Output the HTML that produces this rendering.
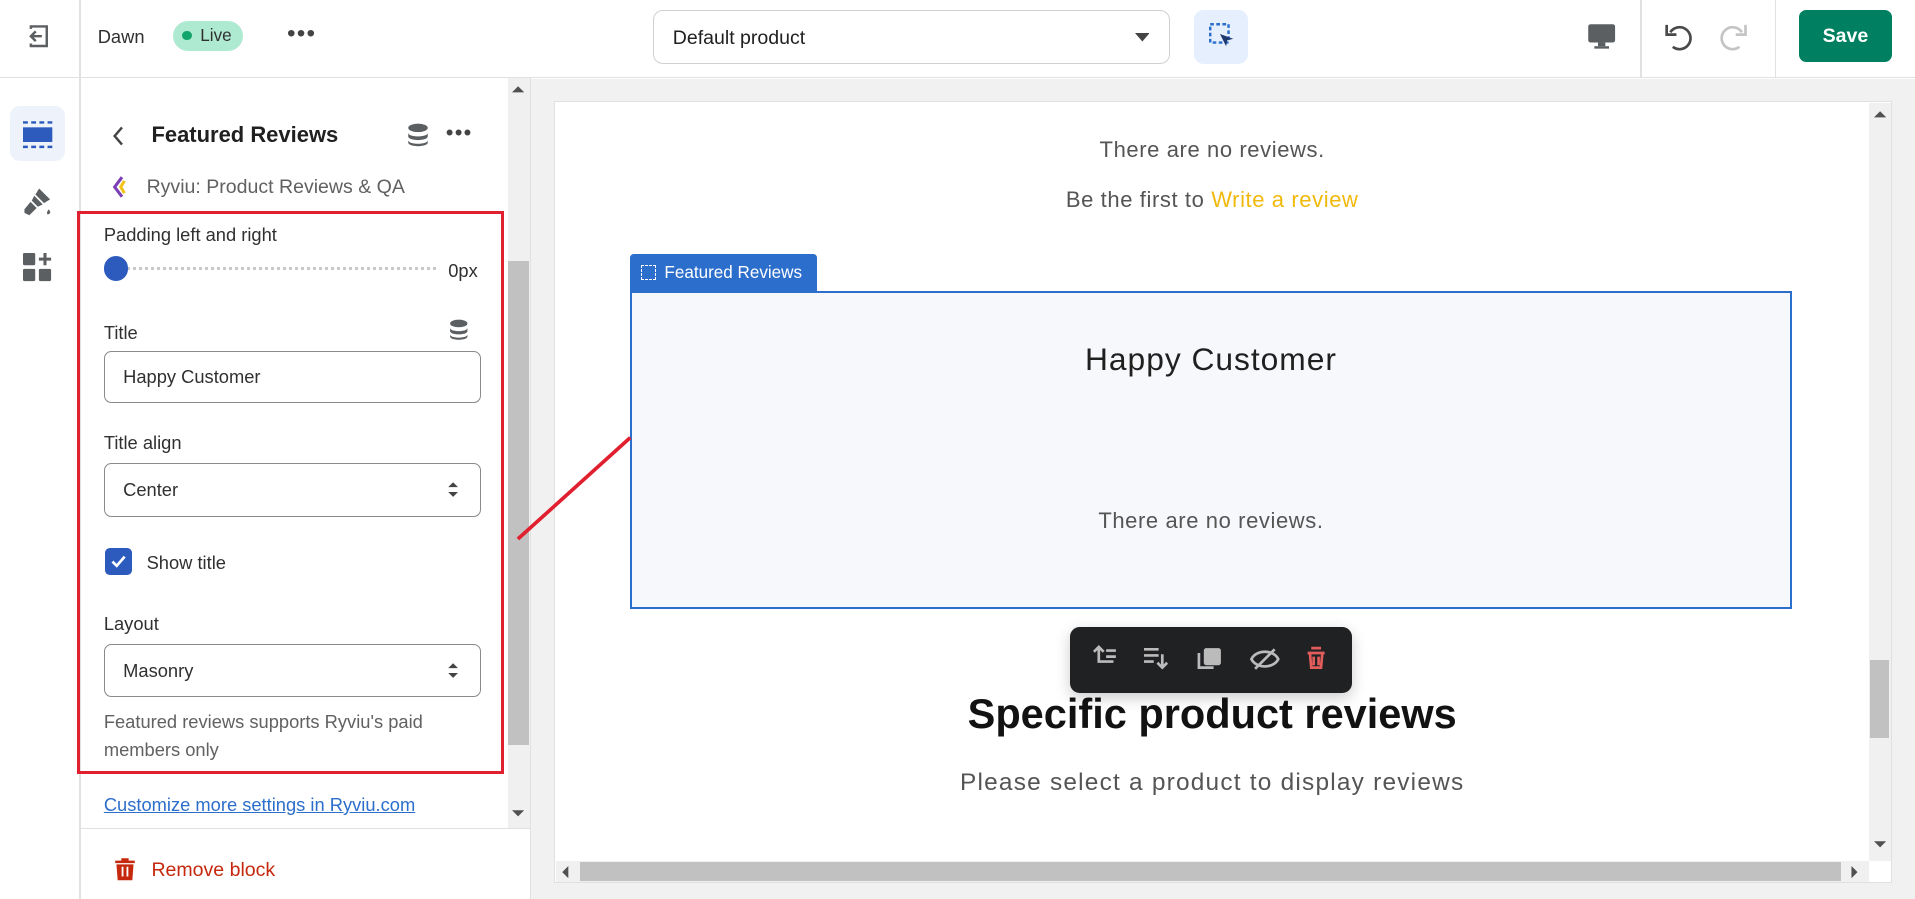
<!DOCTYPE html>
<html><head><meta charset="utf-8"><style>
*{box-sizing:border-box;margin:0;padding:0}
html,body{width:1915px;height:899px;overflow:hidden;background:#fff;font-family:"Liberation Sans",sans-serif}
#w{width:1568px;height:736px;position:relative;zoom:1.22136;color:#303030}
.a{position:absolute}
.t{font-size:15px}
.inp{position:absolute;left:85px;width:309px;border:1px solid #8a8a8a;border-radius:6px;background:#fff;font-size:15px;padding-left:15px;display:flex;align-items:center}
.pre{font-family:"Liberation Sans",sans-serif;color:#555;letter-spacing:.5px}
</style></head><body><div id="w">
<div class="a" style="left:0;top:0;width:1568px;height:64px;border-bottom:1px solid #e1e1e1;background:#fff"></div>
<div class="a" style="left:65px;top:0;width:1px;height:64px;background:#e1e1e1"></div>
<svg class="a" style="left:21px;top:20px" width="20" height="20" viewBox="0 0 20 20"><path d="M4 4V2h13v16H4v-2" fill="none" stroke="#5c5f62" stroke-width="2"/><path d="M13 10H4M8 6l-4 4 4 4" fill="none" stroke="#5c5f62" stroke-width="2"/></svg>
<div class="a t" style="left:80px;top:21px;color:#303030">Dawn</div>
<div class="a" style="left:142px;top:17px;width:57px;height:25px;border-radius:13px;background:#aee9d1;font-size:14px;padding-left:22px;line-height:25px">Live</div>
<div class="a" style="left:149px;top:25px;width:8px;height:8px;border-radius:50%;background:#12a66a"></div>
<div class="a" style="left:235px;top:16px;font-size:20px;color:#444;letter-spacing:1px">•••</div>
<div class="a" style="left:535px;top:8px;width:423px;height:44px;border:1px solid #d0d0d0;border-radius:8px;font-size:16px;padding:13px 15px;color:#202020">Default product</div>
<svg class="a" style="left:929px;top:27px" width="12" height="7"><path d="M0 0h12L6 7z" fill="#444"/></svg>
<div class="a" style="left:978px;top:8px;width:44px;height:44px;border-radius:8px;background:#e5effd"></div>
<svg class="a" style="left:990px;top:19px" width="22" height="22" viewBox="0 0 22 22"><rect x="1" y="1" width="15" height="15" fill="none" stroke="#2c6ecb" stroke-width="2" stroke-dasharray="3 2"/><path d="M9 9l11 4-5 1-1 5z" fill="#1f3a6e"/></svg>
<svg class="a" style="left:1299px;top:19px" width="24" height="22" viewBox="0 0 24 22"><rect x="1" y="1" width="22" height="15" rx="2" fill="#5c5f62"/><rect x="9" y="16" width="6" height="3" fill="#5c5f62"/><rect x="6" y="19" width="12" height="2" fill="#5c5f62"/></svg>
<div class="a" style="left:1343px;top:0;width:1px;height:64px;background:#e1e1e1"></div>
<svg class="a" style="left:1362px;top:16px" width="28" height="28" viewBox="0 0 28 28"><path d="M6 10a9 9 0 1 1 2 12" fill="none" stroke="#4a4a4a" stroke-width="2.2"/><path d="M3 4v8h8" fill="none" stroke="#4a4a4a" stroke-width="2.2"/></svg>
<svg class="a" style="left:1404px;top:16px" width="28" height="28" viewBox="0 0 28 28"><path d="M22 10a9 9 0 1 0-2 12" fill="none" stroke="#c4c4c4" stroke-width="2.2"/><path d="M25 4v8h-8" fill="none" stroke="#c4c4c4" stroke-width="2.2"/></svg>
<div class="a" style="left:1453px;top:0;width:1px;height:64px;background:#e1e1e1"></div>
<div class="a" style="left:1473px;top:8px;width:76px;height:43px;border-radius:6px;background:#008060;color:#fff;font-weight:bold;font-size:16px;text-align:center;line-height:43px">Save</div>
<div class="a" style="left:65px;top:64px;width:1px;height:672px;background:#e1e1e1"></div>
<div class="a" style="left:8px;top:87px;width:45px;height:45px;border-radius:8px;background:#eef3fb"></div>
<svg class="a" style="left:19px;top:98px" width="24" height="24" viewBox="0 0 24 24"><rect x="0" y="6" width="24" height="12" fill="#2c5bbd"/><path d="M0 2h24M0 22h24" stroke="#2c5bbd" stroke-width="2" stroke-dasharray="4 2.7"/></svg>
<svg class="a" style="left:18px;top:152px" width="26" height="26" viewBox="0 0 26 26"><path d="M14 2l9 9-5 3-7-7z M10 8l7 7-4 2-5-5z M7 13l5 5-6 6-4-2 0-3z" fill="#5c5f62"/><path d="M22 19c1 2 2 3 0 4s-2-2 0-4z" fill="#5c5f62"/></svg>
<svg class="a" style="left:19px;top:207px" width="24" height="24" viewBox="0 0 24 24"><rect x="0" y="0" width="10" height="10" rx="1" fill="#5c5f62"/><rect x="0" y="13" width="10" height="10" rx="1" fill="#5c5f62"/><rect x="13" y="13" width="10" height="10" rx="1" fill="#5c5f62"/><path d="M18 0v10M13 5h10" stroke="#5c5f62" stroke-width="2.5"/></svg>
<div class="a" style="left:416px;top:64px;width:18px;height:614px;background:#f0f0f0"></div>
<div class="a" style="left:416px;top:214px;width:17px;height:396px;background:#c1c1c1"></div>
<svg class="a" style="left:419px;top:70px" width="10" height="8"><path d="M0 6h10L5 1z" fill="#505050"/></svg>
<svg class="a" style="left:419px;top:662px" width="10" height="8"><path d="M0 1h10L5 6z" fill="#505050"/></svg>
<div class="a" style="left:434px;top:64px;width:1px;height:672px;background:#e1e1e1"></div>
<svg class="a" style="left:91px;top:102px" width="12" height="18"><path d="M9 2L3 9l6 7" fill="none" stroke="#444" stroke-width="2"/></svg>
<div class="a" style="left:124px;top:100px;font-size:18px;font-weight:bold;color:#202020">Featured Reviews</div>
<svg class="a" style="left:333px;top:101px" width="18" height="20" viewBox="0 0 18 20"><ellipse cx="9" cy="4" rx="8" ry="3.5" fill="#5c5f62"/><path d="M1 8c0 4 16 4 16 0v3c0 4-16 4-16 0z M1 14c0 4 16 4 16 0v2c0 4-16 4-16 0z" fill="#5c5f62"/></svg>
<div class="a" style="left:365px;top:98px;font-size:18px;color:#444;letter-spacing:1px">•••</div>
<svg class="a" style="left:91px;top:144px" width="14" height="18"><path d="M9 1L3 9l6 8" fill="none" stroke="#7b3fb5" stroke-width="2.5"/><path d="M11 4l-3 5 3 5" fill="none" stroke="#f1c21b" stroke-width="2.5"/></svg>
<div class="a t" style="left:120px;top:144px;color:#616161;font-size:16px">Ryviu: Product Reviews &amp; QA</div>
<div class="a" style="left:63px;top:173px;width:350px;height:461px;border:3px solid #e0202e"></div>
<div class="a t" style="left:85px;top:183px">Padding left and right</div>
<div class="a" style="left:95px;top:219px;width:262px;height:3px;border-top:3px dotted #c8c8c8"></div>
<div class="a" style="left:85px;top:210px;width:20px;height:20px;border-radius:50%;background:#2c5bbd"></div>
<div class="a t" style="left:367px;top:213px;color:#303030">0px</div>
<div class="a t" style="left:85px;top:264px">Title</div>
<svg class="a" style="left:368px;top:261px" width="16" height="18" viewBox="0 0 18 20"><ellipse cx="9" cy="4" rx="8" ry="3.5" fill="#5c5f62"/><path d="M1 8c0 4 16 4 16 0v3c0 4-16 4-16 0z M1 14c0 4 16 4 16 0v2c0 4-16 4-16 0z" fill="#5c5f62"/></svg>
<div class="inp" style="top:287px;height:43px">Happy Customer</div>
<div class="a t" style="left:85px;top:354px">Title align</div>
<div class="inp" style="top:379px;height:44px">Center</div>
<svg class="a" style="left:366px;top:394px" width="10" height="14"><path d="M1 5l4-4 4 4zM1 9l4 4 4-4z" fill="#444"/></svg>
<div class="a" style="left:86px;top:449px;width:22px;height:22px;border-radius:4px;background:#2c5bbd"></div>
<svg class="a" style="left:90px;top:453px" width="14" height="14"><path d="M2 7l3.5 3.5L12 3" fill="none" stroke="#fff" stroke-width="2.2"/></svg>
<div class="a t" style="left:120px;top:452px">Show title</div>
<div class="a t" style="left:85px;top:502px">Layout</div>
<div class="inp" style="top:527px;height:44px">Masonry</div>
<svg class="a" style="left:366px;top:542px" width="10" height="14"><path d="M1 5l4-4 4 4zM1 9l4 4 4-4z" fill="#444"/></svg>
<div class="a" style="left:85px;top:580px;font-size:15px;color:#616161;line-height:23px;width:310px">Featured reviews supports Ryviu's paid members only</div>
<div class="a t" style="left:85px;top:650px;color:#2c6ecb;text-decoration:underline">Customize more settings in Ryviu.com</div>
<div class="a" style="left:66px;top:678px;width:368px;height:1px;background:#e1e1e1"></div>
<svg class="a" style="left:93px;top:702px" width="18" height="20" viewBox="0 0 18 20"><path d="M6 1h6v2h5v2H1V3h5z M2 6h14l-1 13H3z" fill="#c5280c"/><path d="M7 8v8M11 8v8" stroke="#fff" stroke-width="1.5"/></svg>
<div class="a" style="left:124px;top:703px;font-size:16px;color:#c5280c">Remove block</div>
<div class="a" style="left:435px;top:65px;width:1133px;height:671px;background:#f1f1f1"></div>
<div class="a" style="left:454px;top:83px;width:1095px;height:640px;background:#fff;border:1px solid #e0e0e0"></div>
<div class="a" style="left:1530px;top:84px;width:18px;height:621px;background:#f0f0f0"></div>
<div class="a" style="left:1531px;top:540px;width:16px;height:64px;background:#c1c1c1"></div>
<div class="a" style="left:455px;top:705px;width:1075px;height:17px;background:#f0f0f0"></div>
<div class="a" style="left:475px;top:706px;width:1032px;height:15px;background:#c1c1c1"></div>
<div class="a pre" style="left:455px;width:1075px;top:112px;text-align:center;font-size:18px">There are no reviews.</div>
<div class="a pre" style="left:455px;width:1075px;top:153px;text-align:center;font-size:18px">Be the first to <span style="color:#f0b90b">Write a review</span></div>
<div class="a" style="left:516px;top:208px;width:153px;height:30px;background:#2c6ecb;border-radius:3px 3px 0 0;color:#fff;font-size:14px;padding:7px 0 0 28px">Featured Reviews</div>
<div class="a" style="left:525px;top:217px;width:12px;height:12px;border:1.5px dashed #fff"></div>
<div class="a" style="left:516px;top:238px;width:951px;height:261px;border:2px solid #2c6ecb;background:#f7f8fc"></div>
<div class="a" style="left:516px;width:951px;top:279px;text-align:center;font-size:26px;color:#202020;letter-spacing:.8px">Happy Customer</div>
<div class="a pre" style="left:516px;width:951px;top:416px;text-align:center;font-size:18px">There are no reviews.</div>
<div class="a" style="left:455px;width:1075px;top:565px;text-align:center;font-size:34px;font-weight:bold;color:#121212;letter-spacing:0">Specific product reviews</div>
<div class="a pre" style="left:455px;width:1075px;top:630px;text-align:center;font-size:20px;letter-spacing:1px">Please select a product to display reviews</div>
<div class="a" style="left:876px;top:513px;width:231px;height:54px;background:#202123;border-radius:8px;box-shadow:0 4px 12px rgba(0,0,0,.2)"></div>
<svg class="a" style="left:892px;top:526px" width="200" height="28" viewBox="0 0 200 28"><g fill="none" stroke="#bbb" stroke-width="2.2"><path d="M4 8l4-4 4 4M8 4v12h12M14 7h8M14 12h8"/><path d="M45 6h12M45 11h12M45 16h8M60 10v10M56 17l4 4 4-4"/></g><rect x="94" y="5" width="14" height="14" rx="2" fill="#bbb"/><path d="M90 9v12h12" fill="none" stroke="#bbb" stroke-width="2.2"/><path d="M133 14c4-8 18-8 22 0c-4 8-18 8-22 0zM136 22l16-16" fill="none" stroke="#bbb" stroke-width="2.2"/><path d="M182 5h8M179 9h14M181 10l1 11h8l1-11M184 12v7M188 12v7" fill="none" stroke="#e25c5c" stroke-width="2.2"/></svg>
<svg class="a" style="left:420px;top:355px" width="100" height="90"><path d="M4 86L96 3" stroke="#e0202e" stroke-width="3"/></svg>
<svg class="a" style="left:459px;top:709px" width="8" height="10"><path d="M6 0v10L1 5z" fill="#505050"/></svg>
<svg class="a" style="left:1514px;top:709px" width="8" height="10"><path d="M2 0v10l5-5z" fill="#505050"/></svg>
<svg class="a" style="left:1534px;top:90px" width="10" height="8"><path d="M0 6h10L5 1z" fill="#505050"/></svg>
<svg class="a" style="left:1534px;top:688px" width="10" height="8"><path d="M0 1h10L5 6z" fill="#505050"/></svg>
</div></body></html>
